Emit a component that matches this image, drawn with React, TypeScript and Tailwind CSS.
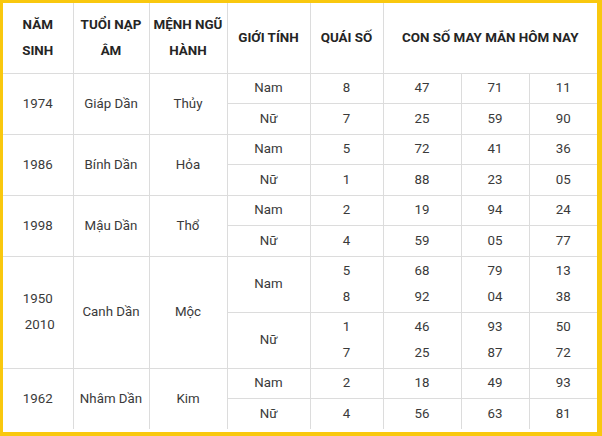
type Gender = { label: string; quai: string[]; nums: string[][] };
type Row = { years: string[]; tuoi: string; menh: string; genders: Gender[]; tall?: boolean };

const ROWS: Row[] = [
  {
    years: ["1974"],
    tuoi: "Giáp Dần",
    menh: "Thủy",
    genders: [
      { label: "Nam", quai: ["8"], nums: [["47"], ["71"], ["11"]] },
      { label: "Nữ", quai: ["7"], nums: [["25"], ["59"], ["90"]] },
    ],
  },
  {
    years: ["1986"],
    tuoi: "Bính Dần",
    menh: "Hỏa",
    genders: [
      { label: "Nam", quai: ["5"], nums: [["72"], ["41"], ["36"]] },
      { label: "Nữ", quai: ["1"], nums: [["88"], ["23"], ["05"]] },
    ],
  },
  {
    years: ["1998"],
    tuoi: "Mậu Dần",
    menh: "Thổ",
    genders: [
      { label: "Nam", quai: ["2"], nums: [["19"], ["94"], ["24"]] },
      { label: "Nữ", quai: ["4"], nums: [["59"], ["05"], ["77"]] },
    ],
  },
  {
    years: ["1950", "2010"],
    tuoi: "Canh Dần",
    menh: "Mộc",
    tall: true,
    genders: [
      { label: "Nam", quai: ["5", "8"], nums: [["68", "92"], ["79", "04"], ["13", "38"]] },
      { label: "Nữ", quai: ["1", "7"], nums: [["46", "25"], ["93", "87"], ["50", "72"]] },
    ],
  },
  {
    years: ["1962"],
    tuoi: "Nhâm Dần",
    menh: "Kim",
    genders: [
      { label: "Nam", quai: ["2"], nums: [["18"], ["49"], ["93"]] },
      { label: "Nữ", quai: ["4"], nums: [["56"], ["63"], ["81"]] },
    ],
  },
];

const cell = "border border-[#dcdcdc] p-0 text-center align-middle";

function Lines({ items, shift }: { items: string[]; shift?: boolean }) {
  return (
    <div className="flex flex-col items-center leading-[26px]">
      {items.map((t, i) => (
        <span key={i} className={shift && i > 0 ? "ml-[4px]" : ""}>
          {t}
        </span>
      ))}
    </div>
  );
}

export default function App() {
  return (
    <div
      className="h-[436px] w-[602px] overflow-hidden bg-white text-[13.3px] text-[#3a3a3a]"
      style={{ fontFamily: "Roboto, 'Liberation Sans', sans-serif" }}
    >
      <div className="h-full w-full border-t-[3px] border-r-[5px] border-b-[4px] border-l-[3px] border-[#f9c80e]">
        <table className="w-[594px] table-fixed border-collapse border-hidden">
          <colgroup>
            <col className="w-[70px]" />
            <col className="w-[76px]" />
            <col className="w-[78px]" />
            <col className="w-[83px]" />
            <col className="w-[73px]" />
            <col className="w-[78px]" />
            <col className="w-[68px]" />
            <col className="w-[68px]" />
          </colgroup>
          <thead>
            <tr className="h-[70px] text-[13.4px] font-bold uppercase leading-[26px] text-[#252525]">
              <th className={cell}>NĂM<br />SINH</th>
              <th className={cell}>TUỔI NẠP<br />ÂM</th>
              <th className={cell}>MỆNH NGŨ<br />HÀNH</th>
              <th className={cell}>GIỚI TÍNH</th>
              <th className={cell}>QUÁI SỐ</th>
              <th className={cell} colSpan={3}>CON SỐ MAY MẮN HÔM NAY</th>
            </tr>
          </thead>
          <tbody>
            {ROWS.map((row) =>
              row.genders.map((g, gi) => (
                <tr key={row.tuoi + g.label} className={row.tall ? "h-[56px]" : "h-[30.5px]"}>
                  {gi === 0 && (
                    <>
                      <td className={cell} rowSpan={2}>
                        <Lines items={row.years} shift />
                      </td>
                      <td className={cell} rowSpan={2}>{row.tuoi}</td>
                      <td className={cell} rowSpan={2}>{row.menh}</td>
                    </>
                  )}
                  <td className={cell}>{g.label}</td>
                  <td className={cell}>
                    <Lines items={g.quai} />
                  </td>
                  {g.nums.map((n, ni) => (
                    <td key={ni} className={cell}>
                      <Lines items={n} />
                    </td>
                  ))}
                </tr>
              )),
            )}
          </tbody>
        </table>
      </div>
    </div>
  );
}
